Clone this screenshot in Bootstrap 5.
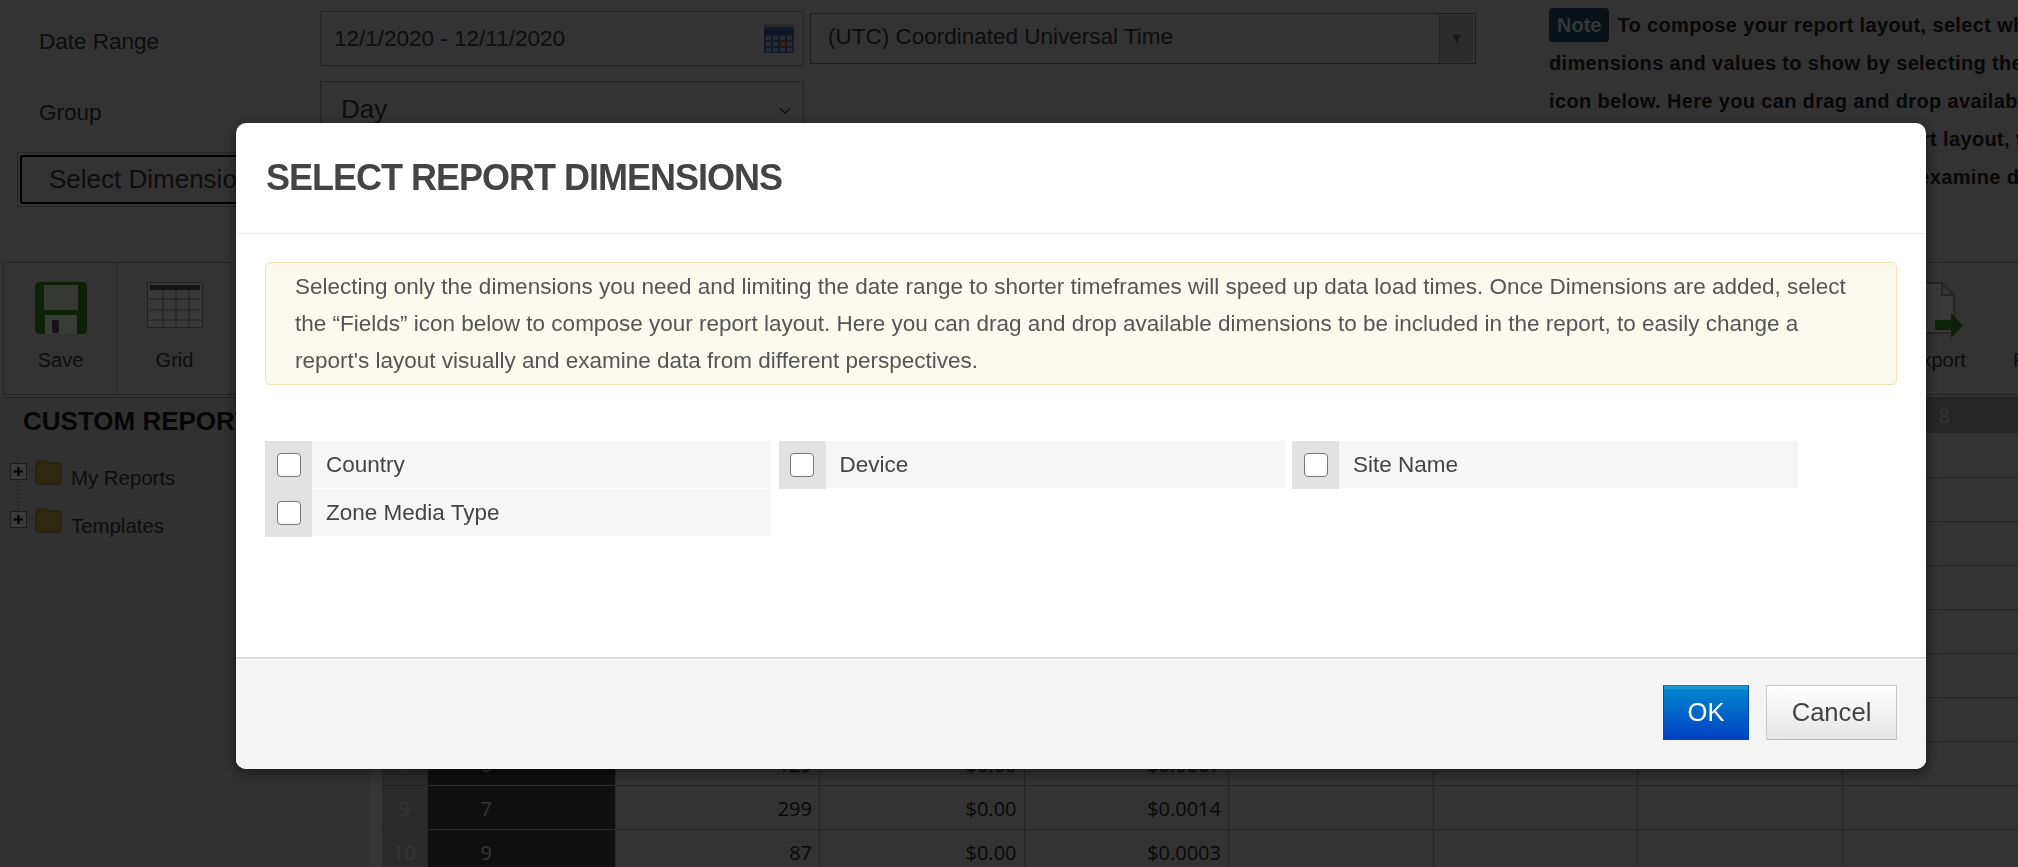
<!DOCTYPE html>
<html lang="en">
<head>
<meta charset="utf-8">
<title>Select Report Dimensions</title>
<link href="https://cdn.jsdelivr.net/npm/bootstrap@5.3.0/dist/css/bootstrap.min.css" rel="stylesheet">
<style>
html,body{height:100%;overflow:hidden}
body{font-family:"Liberation Sans",Arial,sans-serif;color:#2c2c2c;background:#aaa;width:2018px}
.modal-backdrop.show{opacity:.7}
.filter-top{height:262px}
.filter-col{width:1549px;flex:none}
.filter-label{width:320px;flex:none;padding-left:39px;font-size:22.5px;color:#2c2c2c}
.filter-row1{height:81px;padding-top:11px}
.filter-row1 .filter-label{padding-top:14px}
.filter-row2{height:71px}
.filter-row2 .filter-label{padding-top:15px}
.date-box{width:484px;height:55px;flex:none;border:1px solid #7c7c7c;padding-left:13px;font-size:22.5px;color:#303030}
.zone-box{width:666px;height:51px;margin:2px 0 0 6px;border:1px solid #666;padding-left:17px;font-size:22.5px;color:#2e2e2e;flex:none}
.zone-box>span:first-child{margin-top:-3px}
.zone-arrow{width:34px;height:47px;margin-right:2px;background:#939393;border-left:1px solid #7a7a7a;font-size:15px;color:#505050;border-radius:0 0 6px 0}
.group-select.form-select{width:484px;height:60px;flex:none;font-size:26px;color:#2c2c2c;background-color:#aaa;border-color:#7c7c7c;border-radius:0;padding:0 20px 3px;background-position:right 10px center;background-size:16px 12px}
.dim-wrap{margin-left:17px;border:1px solid #7c7c7c;padding:2px;width:300px}
.dim-btn.btn{display:block;width:100%;height:49px;border:2px solid #000;background:#aaa;color:#2c2c2c;font-size:26px;text-align:left;padding:0 0 0 27px;white-space:nowrap;border-radius:3px}
.note-col{padding-top:6px;font-size:20px;font-weight:700;line-height:38px;white-space:nowrap;color:#1c1c1c;letter-spacing:.35px}
.note-tag{display:inline-block;background:#1b3c53;color:#a8b8c0;line-height:34px;height:34px;padding:0 8px;border-radius:4px;margin-right:8px;letter-spacing:0}
.tool-strip{height:136px;margin-left:3px;border:1px solid #7c7c7c;border-bottom:4px double #7c7c7c;width:2100px}
.tool-item{width:114px;flex:none;border-right:1px solid #949494;font-size:20px;padding-top:19px;color:#303030;text-align:center}
.tool-pic{height:52px}
.tool-pic svg{display:block;margin:0 auto}
.tool-item span{display:block;margin-top:11px}
.tool-gap{width:1648px;flex:none}
.tool-export{border:0}
.tool-export .tool-pic svg{margin-left:39px}
.tool-last{width:80px;border:0;padding:82px 0 0 19px;text-align:left}
.lower{height:480px}
.side-pane{width:382px;flex:none;background:#a4a4a4;border-right:12px solid #b2b2b2}
.side-title{font-size:26px;font-weight:700;color:#151515;margin:5px 0 0 23px;line-height:36px;white-space:nowrap}
.tree-row{height:48px;margin-left:10px;font-size:20.4px;color:#2e2e2e}
.tree-row svg{width:54px;height:48px;flex:none}
.tree-row span{margin:7px 0 0 7px}
.first-tree{margin-top:17px}
.data-grid{table-layout:fixed;width:1664.5px;border-collapse:collapse;font-family:"Open Sans",sans-serif;font-size:20px;color:#1c1c1c;margin:0}
.data-grid th{height:35px;background:#808080;color:#b0b0b0;font-weight:400;text-align:center;padding:0;border-right:1px solid #7c7c7c}
.data-grid td{height:44px;padding:3px 7px 0;text-align:right;border:1px solid #7c7c7c;border-width:0 1px 1px 0;background:#aaa}
.data-grid td.row-no{background:#909090;color:#b5b5b5;text-align:center;padding:3px 0 0}
.data-grid td.row-key{background:#333;color:#b0b0b0;text-align:left;padding-left:53px;border-color:#8c8c8c}
.c-a{width:45px}.c-b{width:188px}.c-c{width:204.5px}
.picker-dialog.modal-dialog{max-width:none;width:1690px;margin:123px 0 0 236px}
.picker-content.modal-content{height:646px;border:0;border-radius:10px;color:#555;box-shadow:0 4px 14px rgba(0,0,0,.5)}
.picker-head.modal-header{height:111px;padding:0 30px 2px;border-bottom:1px solid #eee}
.picker-title{font-size:36px;font-weight:700;letter-spacing:-1px;color:#444;margin:0;line-height:40px;padding-top:2px}
.picker-body.modal-body{padding:28px 29px 0}
.picker-note.alert{background:#fcfaee;border:1px solid #f4e2b4;border-radius:5px;padding:5px 29px;font-size:22.5px;line-height:37px;color:#555;margin:0 0 56px;height:123px}
.dim-list{column-gap:7.5px}
.dim-item{width:506px;height:47px;flex:none;background:#f6f6f6;margin-bottom:1px}
.dim-box{width:47px;height:48px;flex:none;background:#e2e2e2}
.dim-box .form-check-input{width:24px;height:24px;margin:0;border-color:#777;border-radius:4px}
.dim-name{font-size:22.5px;padding-left:14px;color:#444}
.picker-foot.modal-footer{height:112px;background:#f4f4f4;border-top:2px solid #ddd;box-shadow:inset 0 1px 0 #fff;padding:26px 29px 0;align-items:flex-start;gap:17px;border-radius:0 0 10px 10px}
.picker-foot .btn{margin:0;height:55px;font-size:25.6px;padding:0;border-radius:0;line-height:1}
.ok-btn.btn{width:86px;color:#fff;border:1px solid #0046b8;border-top-color:#0080c8;background:linear-gradient(#1a95d2 3px,#0085cc 3px,#0042c4)}
.cancel-btn.btn{width:131px;color:#444;border:1px solid #c8c8c8;border-bottom-color:#b4b4b4;background:linear-gradient(#fff,#e6e6e6)}
</style>
</head>
<body>
<div class="d-flex filter-top">
  <div class="filter-col">
    <div class="d-flex filter-row1">
      <div class="filter-label">Date Range</div>
      <div class="date-box d-flex align-items-center justify-content-between">
        <span>12/1/2020 - 12/11/2020</span>
        <svg class="me-2" width="32" height="30" viewBox="0 0 32 30"><rect x="1" y="2" width="30" height="27" fill="#3a5a8a"/><rect x="1" y="0" width="30" height="3" fill="#8a8a8a"/><rect x="1" y="6" width="30" height="4" fill="#2a4680"/><g fill="#7f93ae"><rect x="3" y="12" width="5" height="4"/><rect x="10" y="12" width="5" height="4"/><rect x="17" y="12" width="5" height="4"/><rect x="24" y="12" width="5" height="4"/><rect x="3" y="18" width="5" height="4"/><rect x="10" y="18" width="5" height="4"/><rect x="24" y="18" width="5" height="4"/><rect x="3" y="24" width="5" height="4"/><rect x="10" y="24" width="5" height="4"/><rect x="17" y="24" width="5" height="4"/><rect x="24" y="24" width="5" height="4"/></g><rect x="17" y="17" width="6" height="6" fill="#8f8f8f" stroke="#a63a28" stroke-width="2"/></svg>
      </div>
      <div class="zone-box d-flex align-items-center justify-content-between">
        <span>(UTC) Coordinated Universal Time</span>
        <span class="zone-arrow d-flex align-items-center justify-content-center">▼</span>
      </div>
    </div>
    <div class="d-flex filter-row2">
      <div class="filter-label">Group</div>
      <select class="form-select group-select"><option>Day</option></select>
    </div>
    <div class="dim-wrap"><button type="button" class="btn dim-btn">Select Dimensions</button></div>
  </div>
  <div class="note-col">
    <span class="note-tag">Note</span>To compose your report layout, select which<br>
    dimensions and values to show by selecting the "Fields"<br>
    icon below. Here you can drag and drop available<br>
    dimensions to be included in the report layout, to easily<br>
    change a report's layout visually and examine data
  </div>
</div>

<div class="d-flex tool-strip">
  <div class="tool-item">
    <div class="tool-pic"><svg viewBox="0 0 52 52" width="52" height="52"><rect x=".5" y=".5" width="51" height="51" rx="4" fill="#2e6e16" stroke="#24580f"/><rect x="9" y="3" width="34" height="25" fill="#b4bcae"/><rect x="10" y="33" width="32" height="19" fill="#bcc8b8"/><rect x="17" y="38" width="7" height="13" rx="2" fill="#444"/></svg></div>
    <span>Save</span>
  </div>
  <div class="tool-item">
    <div class="tool-pic"><svg viewBox="0 0 56 46" width="56" height="46"><rect x=".5" y=".5" width="55" height="45" fill="#bcbcbc" stroke="#6e6e6e"/><rect x="3" y="3" width="50" height="5" fill="#444"/><path d="M2 17h52M2 28h52M2 38h52M16 8v36M29 8v36M42 8v36" stroke="#6e6e6e" fill="none"/></svg></div>
    <span>Grid</span>
  </div>
  <div class="tool-gap"></div>
  <div class="tool-item tool-export">
    <div class="tool-pic"><svg viewBox="0 0 44 56" width="44" height="56"><path d="M1 1h22l12 12v38H1z" fill="#bcbcbc" stroke="#7c7c7c" stroke-width="2"/><path d="M23 1v12h12" fill="none" stroke="#7c7c7c" stroke-width="2"/><path d="M16 38h16v-7l12 12.500L32 56v-8H16z" fill="#2a7014"/></svg></div>
    <span>Export</span>
  </div>
  <div class="tool-item tool-last">Fields</div>
</div>

<div class="d-flex lower">
  <div class="side-pane">
    <div class="side-title">CUSTOM REPORTS</div>
    <div class="tree-row first-tree d-flex">
      <svg viewBox="0 0 54 48"><path d="M8 1v5M8 25v24M18 15h8" stroke="#5c5c5c" stroke-dasharray="2 2" fill="none"/><rect x=".5" y="7.500" width="16" height="16" fill="#c3c3c3" stroke="#5c5c5c"/><path d="M4 15.500h9M8.500 11v9" stroke="#000" stroke-width="2"/><path d="M26 7q0-2 2-2h7q2 0 3 2h11q2 0 2 2v17q0 2-2 2H28q-2 0-2-2z" fill="#a08a3a" stroke="#7a5a14"/></svg>
      <span>My Reports</span>
    </div>
    <div class="tree-row d-flex">
      <svg viewBox="0 0 54 48"><path d="M8 0v6M18 15h8" stroke="#5c5c5c" stroke-dasharray="2 2" fill="none"/><rect x=".5" y="7.500" width="16" height="16" fill="#c3c3c3" stroke="#5c5c5c"/><path d="M4 15.500h9M8.500 11v9" stroke="#000" stroke-width="2"/><path d="M26 7q0-2 2-2h7q2 0 3 2h11q2 0 2 2v17q0 2-2 2H28q-2 0-2-2z" fill="#a08a3a" stroke="#7a5a14"/></svg>
      <span>Templates</span>
    </div>
  </div>
  <div class="flex-grow-1 overflow-hidden">
    <table class="data-grid">
      <colgroup><col class="c-a"><col class="c-b"><col class="c-c"><col class="c-c"><col class="c-c"><col class="c-c"><col class="c-c"><col class="c-c"><col class="c-c"></colgroup>
      <thead><tr><th></th><th>1</th><th>2</th><th>3</th><th>4</th><th>5</th><th>6</th><th>7</th><th>8</th></tr></thead>
      <tbody>
        <tr><td class="row-no">1</td><td class="row-key">0</td><td></td><td></td><td></td><td></td><td></td><td></td><td></td></tr>
        <tr><td class="row-no">2</td><td class="row-key">1</td><td></td><td></td><td></td><td></td><td></td><td></td><td></td></tr>
        <tr><td class="row-no">3</td><td class="row-key">2</td><td></td><td></td><td></td><td></td><td></td><td></td><td></td></tr>
        <tr><td class="row-no">4</td><td class="row-key">3</td><td></td><td></td><td></td><td></td><td></td><td></td><td></td></tr>
        <tr><td class="row-no">5</td><td class="row-key">4</td><td></td><td></td><td></td><td></td><td></td><td></td><td></td></tr>
        <tr><td class="row-no">6</td><td class="row-key">5</td><td></td><td></td><td></td><td></td><td></td><td></td><td></td></tr>
        <tr><td class="row-no">7</td><td class="row-key">6</td><td></td><td></td><td></td><td></td><td></td><td></td><td></td></tr>
        <tr><td class="row-no">8</td><td class="row-key">6</td><td>129</td><td>$0.00</td><td>$0.0007</td><td></td><td></td><td></td><td></td></tr>
        <tr><td class="row-no">9</td><td class="row-key">7</td><td>299</td><td>$0.00</td><td>$0.0014</td><td></td><td></td><td></td><td></td></tr>
        <tr><td class="row-no">10</td><td class="row-key">9</td><td>87</td><td>$0.00</td><td>$0.0003</td><td></td><td></td><td></td><td></td></tr>
      </tbody>
    </table>
  </div>
</div>

<div class="modal-backdrop show"></div>
<div class="modal d-block" tabindex="-1">
  <div class="modal-dialog picker-dialog">
    <div class="modal-content picker-content">
      <div class="modal-header picker-head">
        <h2 class="picker-title">SELECT REPORT DIMENSIONS</h2>
      </div>
      <div class="modal-body picker-body">
        <div class="alert picker-note">Selecting only the dimensions you need and limiting the date range to shorter timeframes will speed up data load times. Once Dimensions are added, select the “Fields” icon below to compose your report layout. Here you can drag and drop available dimensions to be included in the report, to easily change a report's layout visually and examine data from different perspectives.</div>
        <div class="d-flex flex-wrap dim-list">
          <label class="dim-item d-flex"><span class="dim-box d-flex align-items-center justify-content-center"><input class="form-check-input" type="checkbox"></span><span class="dim-name align-self-center">Country</span></label>
          <label class="dim-item d-flex"><span class="dim-box d-flex align-items-center justify-content-center"><input class="form-check-input" type="checkbox"></span><span class="dim-name align-self-center">Device</span></label>
          <label class="dim-item d-flex"><span class="dim-box d-flex align-items-center justify-content-center"><input class="form-check-input" type="checkbox"></span><span class="dim-name align-self-center">Site Name</span></label>
          <label class="dim-item d-flex"><span class="dim-box d-flex align-items-center justify-content-center"><input class="form-check-input" type="checkbox"></span><span class="dim-name align-self-center">Zone Media Type</span></label>
        </div>
      </div>
      <div class="modal-footer picker-foot">
        <button type="button" class="btn ok-btn">OK</button>
        <button type="button" class="btn cancel-btn">Cancel</button>
      </div>
    </div>
  </div>
</div>
<script src="https://cdn.jsdelivr.net/npm/bootstrap@5.3.0/dist/js/bootstrap.bundle.min.js"></script>
</body>
</html>
